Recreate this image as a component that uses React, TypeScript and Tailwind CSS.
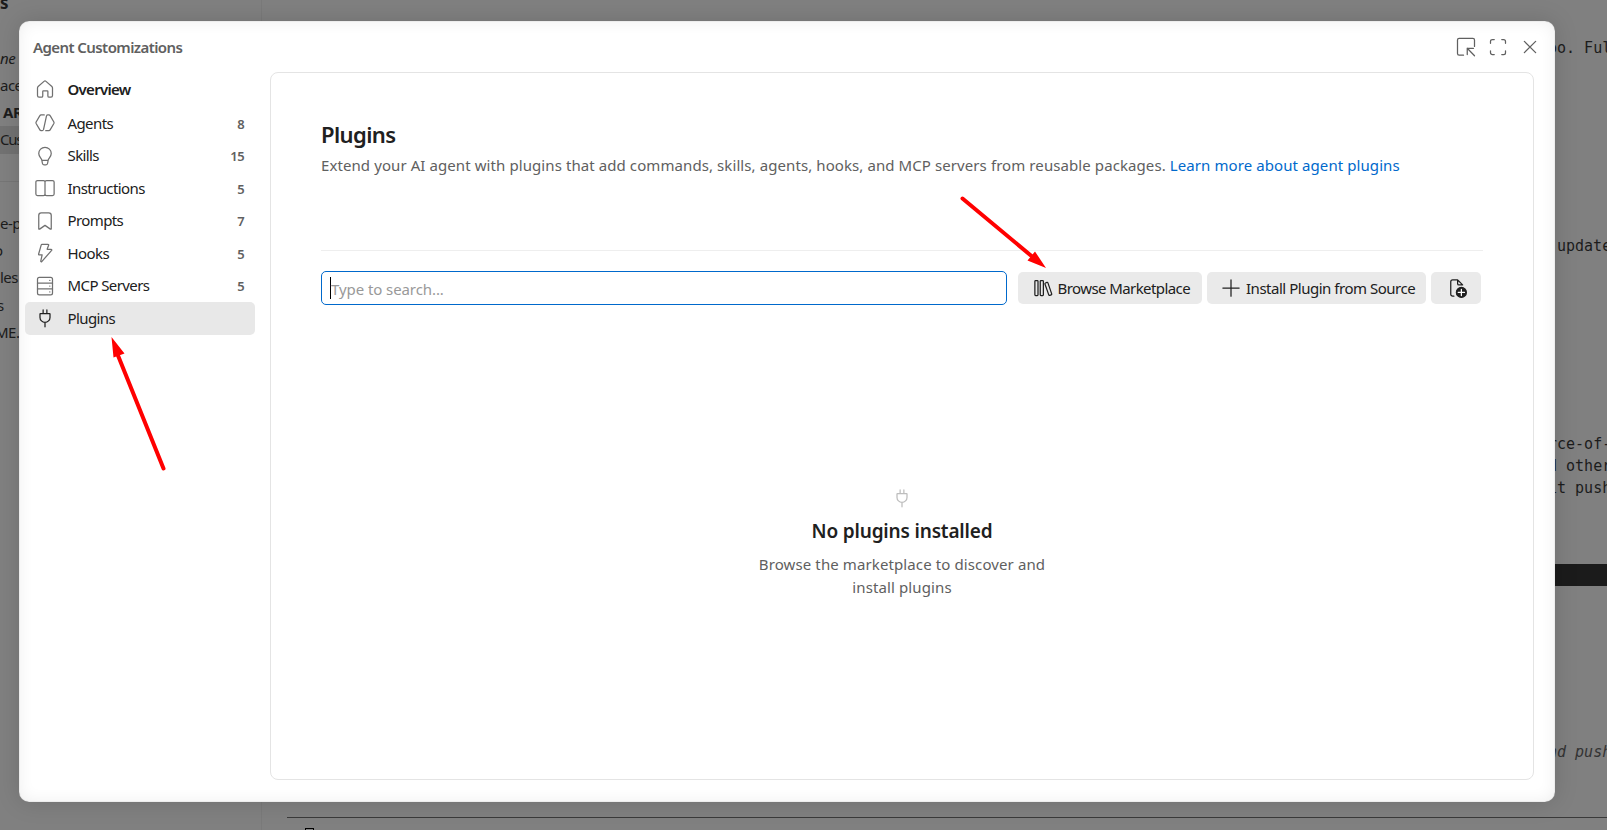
import type { ReactNode } from 'react'

interface IconProps {
  className?: string
  children: ReactNode
}

function Icon({ className, children }: IconProps) {
  return (
    <svg
      viewBox="0 0 16 16"
      fill="none"
      stroke="currentColor"
      strokeWidth="1"
      strokeLinecap="round"
      strokeLinejoin="round"
      className={`h-5 w-5 shrink-0 ${className ?? ''}`}
      aria-hidden
    >
      {children}
    </svg>
  )
}

const plug = (
  <path d="M6.5 1.5v3M9.5 1.5v3M4.3 4.5h7.4c.2 0 .3.1.3.3V7.500a4 4 0 0 1-8 0V4.800c0-.2.1-.3.3-.3ZM8 11.500v3.500" />
)

interface NavEntry {
  label: string
  count?: number
  icon: ReactNode
}

const entries: NavEntry[] = [
  {
    label: 'Overview',
    icon: (
      <path d="M2 7.2c0-.5.2-.9.500-1.200l4.700-4.100c.5-.4 1.100-.4 1.600 0l4.700 4.100c.3.3.5.7.5 1.200v6c0 .7-.5 1.300-1.200 1.300h-1.500c-.6 0-1-.4-1-1V10c0-.3-.2-.5-.5-.5H6.700c-.3 0-.5.2-.5.5v3.500c0 .6-.4 1-1 1H3.200C2.500 14.500 2 13.900 2 13.200Z" />
    ),
  },
  {
    label: 'Agents',
    count: 8,
    icon: (
      <path d="M7.400 1.500H4.900c-.4 0-.8.200-1 .600L.9 7.200c-.2.400-.2.800 0 1.200l3 5.100c.2.400.6.600 1 .600h.9c.5 0 .8-.3 1-.800L9.200 2.300c.2-.5.500-.8 1-.8h.9c.4 0 .8.200 1 .600l3 5.100c.2.400.2.800 0 1.200l-3 5.100c-.2.400-.6.600-1 .600H8.600" />
    ),
  },
  {
    label: 'Skills',
    count: 15,
    icon: (
      <path d="M5.500 11.500C5.300 9.800 3 8.700 3 6a5 5 0 0 1 10 0c0 2.700-2.300 3.800-2.500 5.500ZM5.500 11.500l.4 2.300c.1.700.6 1.200 1.300 1.200h1.600c.7 0 1.200-.5 1.300-1.200l.4-2.300" />
    ),
  },
  {
    label: 'Instructions',
    count: 5,
    icon: (
      <path d="M8 3.200v9.600M8 3.200c0-.7-.5-1.200-1.200-1.200H2C1.200 2 .7 2.500.7 3.200v9.600c0 .7.5 1.200 1.300 1.200h4.800c.7 0 1.200-.5 1.200-1.200 0 .7.500 1.200 1.200 1.200H14c.8 0 1.300-.5 1.300-1.200V3.200c0-.7-.5-1.200-1.300-1.200H9.200C8.500 2 8 2.500 8 3.200Z" />
    ),
  },
  {
    label: 'Prompts',
    count: 7,
    icon: (
      <path d="M3 3.500C3 2.400 3.900 1.500 5 1.500h6c1.100 0 2 .9 2 2v10.600c0 .4-.4.600-.7.400L8 11.500l-4.300 3c-.3.200-.7 0-.7-.4Z" />
    ),
  },
  {
    label: 'Hooks',
    count: 5,
    icon: (
      <path d="M5.600 1h4.800c.4 0 .7.400.5.800L9.700 5h3.200c.5 0 .7.500.4.900L5.400 14.900c-.3.400-.9.100-.8-.400L5.700 9.500H3.400c-.4 0-.6-.3-.5-.7l2.100-7.300c.1-.3.300-.5.600-.5Z" />
    ),
  },
  {
    label: 'MCP Servers',
    count: 5,
    icon: (
      <>
        <rect x="2" y="1" width="12" height="14" rx="1.500" />
        <path d="M2 5.700h12M2 10.300h12M11.800 3.500h.1M11.800 8h.1M11.800 12.700h.1" />
      </>
    ),
  },
  { label: 'Plugins', icon: plug },
]

function Sidebar() {
  return (
    <nav className="flex w-[230px] shrink-0 flex-col pt-px text-[15px] text-[#202020]">
      {entries.map(({ label, count, icon }) => {
        const selected = label === 'Plugins'
        return (
          <div
            key={label}
            className={`flex h-[32.5px] shrink-0 items-center rounded-[5px] pr-[11px] pl-[10px] first:mb-[1.5px] ${
              selected ? 'bg-[#e8e8e8]' : ''
            }`}
          >
            <Icon className={selected ? 'text-[#202020]' : 'text-[#707070]'}>{icon}</Icon>
            <span
              className={`ml-[12.5px] flex-1 pb-px whitespace-nowrap ${
                label === 'Overview' ? 'font-semibold tracking-[-0.7px]' : 'tracking-[-0.6px]'
              }`}
            >
              {label}
            </span>
            {count !== undefined && (
              <span className="pt-[2px] text-[13px] font-semibold tracking-[-0.6px] text-[#606060]">{count}</span>
            )}
          </div>
        )
      })}
    </nav>
  )
}

function Toolbar() {
  return (
    <div className="mt-[20px] flex h-[34px] shrink-0 items-center text-[15px] text-[#202020]">
      <div className="flex h-[34px] w-[686px] items-center rounded-[5px] border border-[#0069cc] pl-2">
        <span className="h-[22px] w-px bg-black" />
        <span className="pt-[2px] tracking-[-0.08px] text-[#999]">Type to search...</span>
      </div>
      <button className="ml-[11px] flex h-8 w-[184px] items-center rounded-[5px] bg-[#eaeaea] pl-[15px]">
        <Icon>
          <rect x="1.500" y="2" width="2.500" height="12" rx=".6" />
          <rect x="5.800" y="2" width="2.500" height="12" rx=".6" />
          <rect x="11" y="3.500" width="2.500" height="10.500" rx=".6" transform="rotate(-19 12.200 8.700)" />
        </Icon>
        <span className="ml-[4.5px] pt-px whitespace-nowrap tracking-[-0.58px]">Browse Marketplace</span>
      </button>
      <button className="ml-[5px] flex h-8 w-[219px] items-center rounded-[5px] bg-[#eaeaea] pl-[14px]">
        <Icon>
          <path d="M8 1.500v13M1.500 8h13" />
        </Icon>
        <span className="ml-[5px] pt-px whitespace-nowrap tracking-[-0.48px]">Install Plugin from Source</span>
      </button>
      <button className="ml-[5px] flex h-8 w-[50px] items-center justify-center rounded-[5px] bg-[#eaeaea] pl-[2px]">
        <Icon>
          <path d="M5.500 14.500H4.500c-.8 0-1.500-.7-1.500-1.500V3c0-.8.7-1.500 1.500-1.500h4L12.500 5.500M8.500 1.500v3c0 .600.4 1 1 1h3" />
          <circle cx="11.500" cy="11.500" r="4" fill="currentColor" />
          <path d="M11.500 9v5M9 11.500h5" stroke="#fff" />
        </Icon>
      </button>
    </div>
  )
}

function EmptyState() {
  return (
    <div className="mt-[182.5px] flex flex-col items-center">
      <Icon className="text-[#bdbdbd]">{plug}</Icon>
      <h2 className="mt-[9px] text-[19px] leading-[28px] font-semibold tracking-[-0.17px] text-[#202020]">
        No plugins installed
      </h2>
      <p className="mt-[8.5px] w-[320px] text-center text-[15px] leading-[23px] tracking-[0.11px] text-[#606060]">
        Browse the marketplace to discover and
        <br />
        install plugins
      </p>
    </div>
  )
}

function Dialog() {
  return (
    <div className="absolute top-[21px] left-[19px] flex h-[781px] w-[1536px] flex-col rounded-[10px] bg-white shadow-[0_0_25px_rgba(0,0,0,0.14),inset_0_0_16px_rgba(0,0,0,0.07),inset_0_0_1px_rgba(0,0,0,0.4)]">
      <header className="flex h-[51px] shrink-0 items-center justify-between pr-[15px] pl-[14px]">
        <h1 className="pt-[2px] text-[15px] font-semibold tracking-[-0.58px] text-[#606060]">Agent Customizations</h1>
        <div className="flex items-center gap-[12px] text-[#606060]">
          <Icon>
            <path d="M6 14.500H2.500c-.8 0-1.300-.5-1.300-1.300V2.300C1.200 1.500 1.700 1 2.500 1h11c.8 0 1.300.5 1.300 1.300V7.500M9 14V9h5M9 9l5.800 6" />
          </Icon>
          <Icon>
            <path d="M2 5V3.500C2 2.700 2.700 2 3.500 2H5M11 2h1.500c.8 0 1.500.7 1.500 1.500V5M14 11v1.500c0 .8-.7 1.500-1.500 1.500H11M5 14H3.500C2.700 14 2 13.300 2 12.500V11" />
          </Icon>
          <Icon>
            <path d="m3.500 3.500 9 9M12.500 3.500l-9 9" />
          </Icon>
        </div>
      </header>
      <div className="flex flex-1 pb-[22px] pl-[6px]">
        <Sidebar />
        <main className="ml-[15px] flex w-[1264px] flex-col rounded-[8px] border border-[#e4e4e4] bg-white pt-[45px] pr-[50px] pl-[50px]">
          <h1 className="text-[22px] leading-[32px] font-semibold tracking-[-0.6px] text-[#202020]">Plugins</h1>
          <p className="mt-[3.5px] text-[15px] leading-[23px] whitespace-nowrap tracking-[0.087px] text-[#606060]">
            Extend your AI agent with plugins that add commands, skills, agents, hooks, and MCP servers from reusable packages.{' '}
            <a className="text-[#0069cc]">Learn more about agent plugins</a>
          </p>
          <div className="mt-[73.5px] h-px shrink-0 bg-[#eeeeee]" />
          <Toolbar />
          <EmptyState />
        </main>
      </div>
    </div>
  )
}

// Dimmed workbench visible around the edges of the dialog
function Workbench() {
  return (
    <div className="flex h-full bg-[#808080] text-[#1c1c1c]">
      <aside className="flex w-[262px] shrink-0 flex-col border-r border-[#7a7a7a] text-[15px] leading-[27px] tracking-[-0.5px]">
        <div className="-mt-[11px] h-[56px] text-[17px] font-bold">s</div>
        <div className="h-[27px] italic">ne</div>
        <div className="h-[27px]">ace</div>
        <div className="h-[27px] pl-[3px] font-bold">AR</div>
        <div className="h-[28px] bg-[#727272] tracking-[-1.2px]">Cus</div>
        <div className="h-[28px] border-b border-[#767676]" />
        <div className="mt-[28px] h-[27px]">e-p</div>
        <div className="-ml-[6px] h-[27px]">o</div>
        <div className="h-[28px]">les</div>
        <div className="-ml-[3px] h-[27px]">s</div>
        <div className="-ml-[5px] h-[27px]">ME.</div>
      </aside>
      <div className="flex min-w-0 flex-1 flex-col font-['DejaVu_Sans_Mono',monospace] text-[15px] leading-[22px] whitespace-pre">
        <div className="mt-[37px] ml-[1286px] shrink-0">oo. Ful</div>
        <div className="mt-[176px] ml-[1295px] shrink-0">update</div>
        <div className="mt-[176px] ml-[1286px] shrink-0">rce-of-</div>
        <div className="ml-[1286px] shrink-0">d other</div>
        <div className="ml-[1286px] shrink-0">it push</div>
        <div className="mt-[65px] h-[22px] shrink-0 bg-[#1b1b1b]" />
        <div className="mt-[155px] ml-[1286px] shrink-0 text-[#333] italic">nd push</div>
        <div className="mt-[54px] ml-[25px] h-px shrink-0 bg-[#3a3a3a]" />
        <div className="mt-[10px] ml-[43px] h-[9px] w-[9px] shrink-0 border border-black" />
      </div>
    </div>
  )
}

export default function App() {
  return (
    <div className="relative h-[830px] w-[1607px] overflow-hidden font-['Noto_Sans','Open_Sans',sans-serif]">
      <Workbench />
      <Dialog />
      {/* Callout arrows */}
      <svg className="pointer-events-none absolute inset-0 h-full w-full" viewBox="0 0 1607 830" fill="#ff0000" stroke="#ff0000">
        <path d="M163.500 468.500 117 353M962.500 198.500l69 57.500" strokeWidth="4" strokeLinecap="round" />
        <path d="m111.500 337 13 16.500-11 4ZM1046 268l-18.500-7.500 7.500-9Z" stroke="none" />
      </svg>
    </div>
  )
}
